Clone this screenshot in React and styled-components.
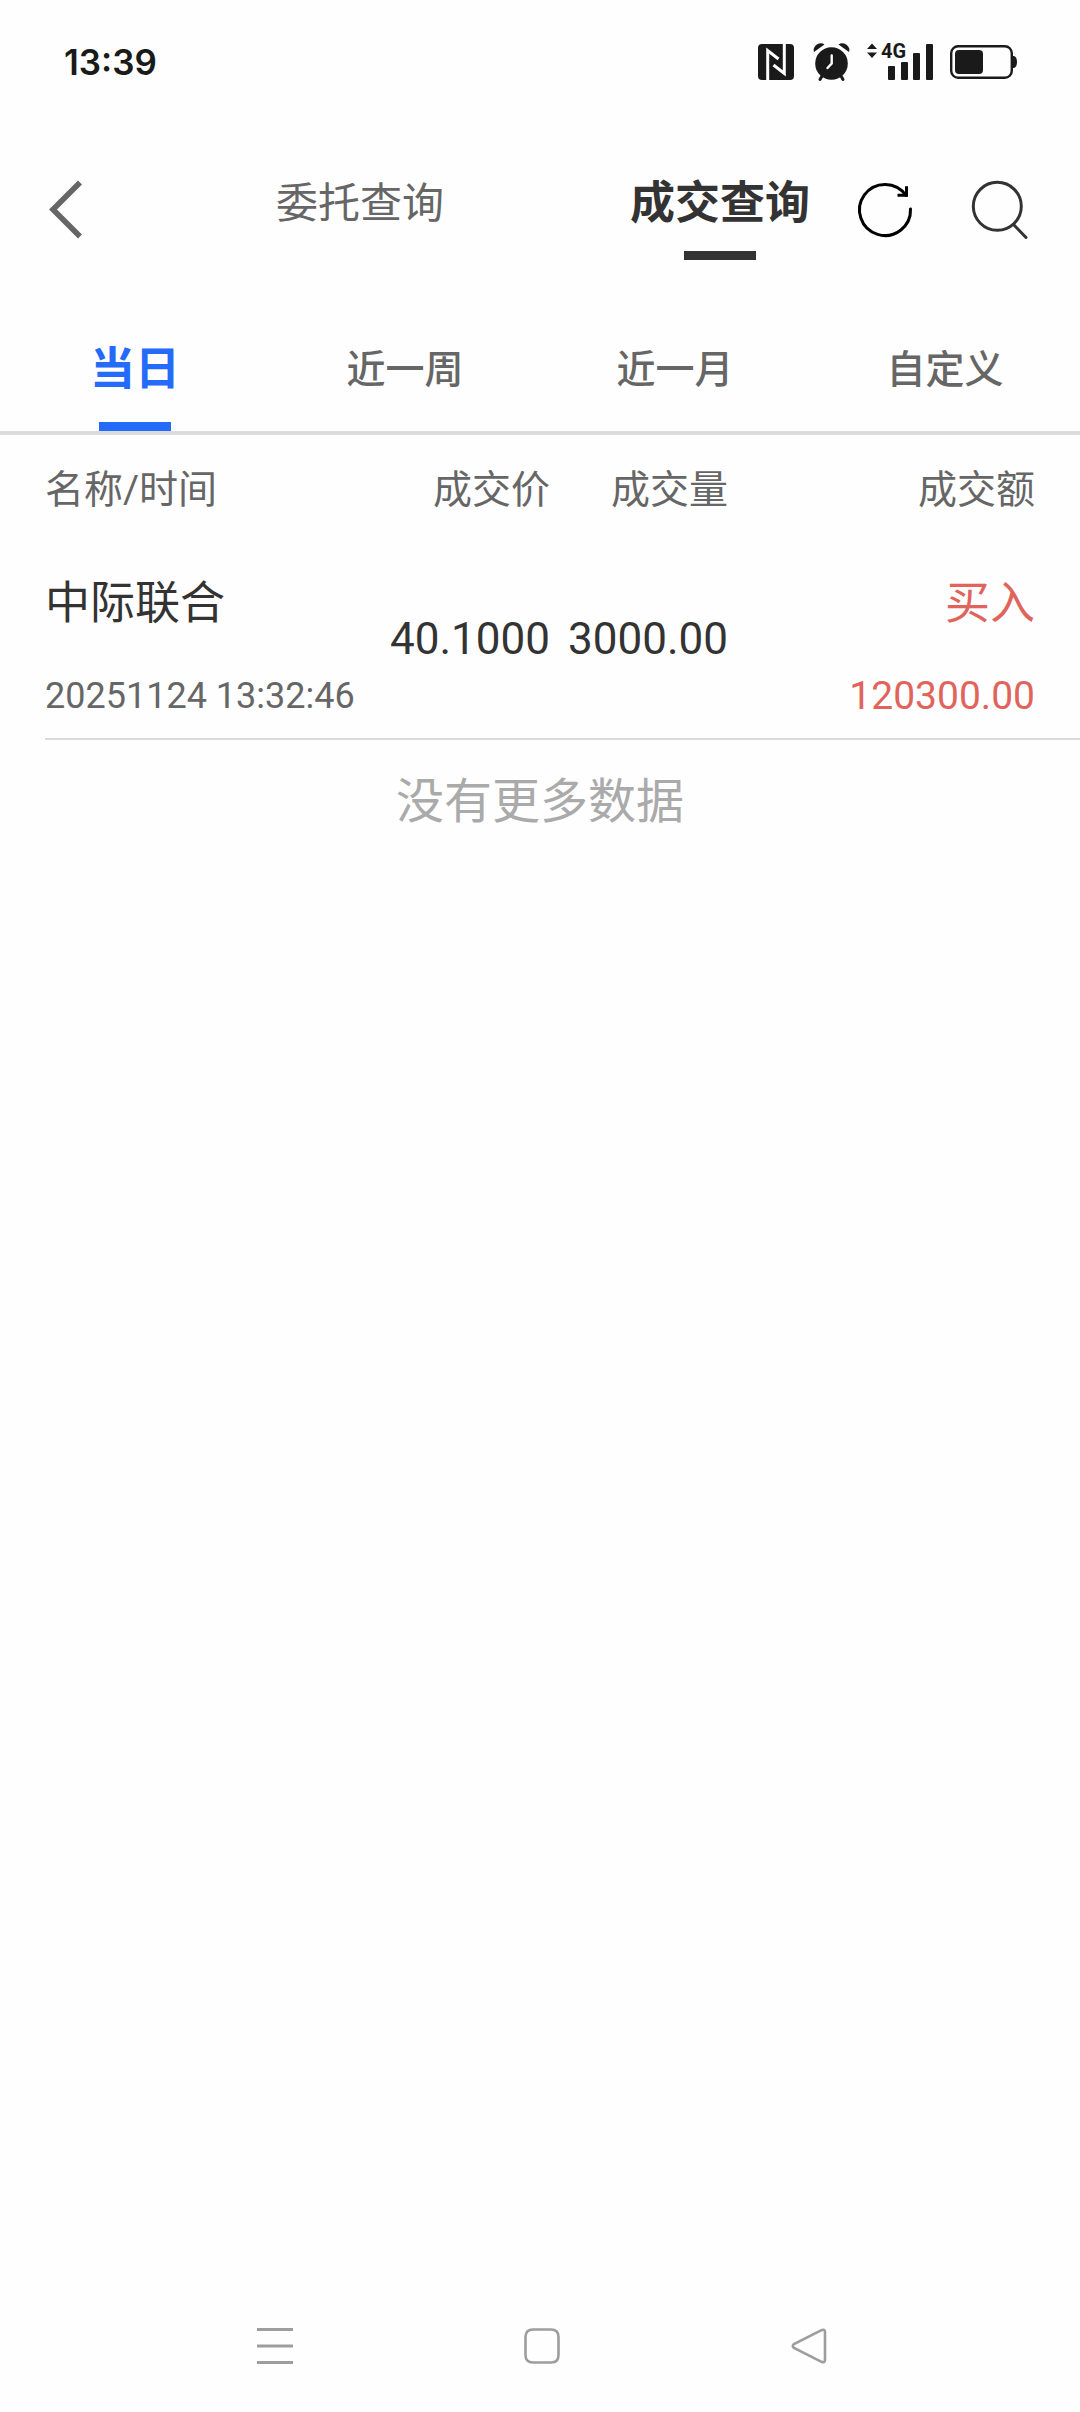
import React, { useState } from "react";
import styled, { createGlobalStyle } from "styled-components";

const periods = ["当日", "近一周", "近一月", "自定义"];

const deals = [
  {
    name: "中际联合",
    time: "20251124 13:32:46",
    price: "40.1000",
    volume: "3000.00",
    side: "买入",
    amount: "120300.00",
  },
];

const App = () => {
  const [page, setPage] = useState("成交查询");
  const [period, setPeriod] = useState("当日");

  return (
    <>
      <GlobalStyle />
      <Screen>
        <StatusBar>
          <Clock>13:39</Clock>
          <StatusIcons>
            <NfcIcon />
            <AlarmIcon />
            <SignalIcon />
            <BatteryIcon />
          </StatusIcons>
        </StatusBar>

        <Header>
          <IconButton aria-label="返回">
            <svg width="32" height="58" viewBox="0 0 32 58" fill="none" stroke="#666" strokeWidth="5.600">
              <path d="M30 1.500L3 28.500L30 55.500" />
            </svg>
          </IconButton>
          <PageTabs>
            {["委托查询", "成交查询"].map((item) => (
              <PageTab key={item} $active={item === page} onClick={() => setPage(item)}>
                {item}
              </PageTab>
            ))}
          </PageTabs>
          <Actions>
            <IconButton aria-label="刷新">
              <svg width="54" height="54" viewBox="0 0 54 54" fill="none" stroke="#000" strokeWidth="3">
                <path d="M52.500 26A25.500 25.500 0 1 1 48 12.500" strokeLinecap="round" />
                <path d="M39.500 12.300H48.500V3.200" />
              </svg>
            </IconButton>
            <IconButton aria-label="搜索">
              <svg width="56" height="58" viewBox="0 0 56 58" fill="none" stroke="#333" strokeWidth="3">
                <circle cx="25.300" cy="25.300" r="24" />
                <path d="M41.500 43.500L54 56.500" strokeLinecap="round" />
              </svg>
            </IconButton>
          </Actions>
        </Header>

        <Periods>
          {periods.map((item) => (
            <Period key={item} $active={item === period} onClick={() => setPeriod(item)}>
              {item}
            </Period>
          ))}
        </Periods>

        <Deals>
          <thead>
            <tr>
              <NameHead>名称/时间</NameHead>
              <NumberHead>成交价</NumberHead>
              <NumberHead>成交量</NumberHead>
              <AmountHead>成交额</AmountHead>
            </tr>
          </thead>
          <tbody>
            {deals.map((deal) => (
              <DealRow key={deal.time}>
                <NameCell>
                  <Name>{deal.name}</Name>
                  <Time>{deal.time}</Time>
                </NameCell>
                <NumberCell>{deal.price}</NumberCell>
                <NumberCell>{deal.volume}</NumberCell>
                <AmountCell>
                  <Side>{deal.side}</Side>
                  <Amount>{deal.amount}</Amount>
                </AmountCell>
              </DealRow>
            ))}
          </tbody>
        </Deals>
        <NoMore>没有更多数据</NoMore>

        <SystemNav>
          <IconButton aria-label="菜单">
            <svg width="36" height="36" viewBox="0 0 36 36" fill="none" stroke="#9d9d9d" strokeWidth="3">
              <path d="M0 1.500H36M0 18H36M0 34.500H36" />
            </svg>
          </IconButton>
          <IconButton aria-label="主屏幕">
            <svg width="36" height="36" viewBox="0 0 36 36" fill="none" stroke="#9d9d9d" strokeWidth="2.600">
              <path d="M9 1.500H27Q34.500 1.500 34.500 9V27Q34.500 34.500 27 34.500H9Q1.500 34.500 1.500 27V9Q1.500 1.500 9 1.500Z" />
            </svg>
          </IconButton>
          <IconButton aria-label="后退">
            <svg width="36" height="36" viewBox="0 0 36 36" fill="none" stroke="#9d9d9d" strokeWidth="2.600">
              <path d="M30.500 2.200L3 16Q0.500 18 3 20L30.500 33.800Q33.800 35.200 34 32V4Q33.800 0.800 30.500 2.200Z" />
            </svg>
          </IconButton>
        </SystemNav>
      </Screen>
    </>
  );
};

const NfcIcon = () => (
  <svg width="38" height="36" viewBox="0 0 38 36">
    <rect width="36" height="36" rx="4" fill="#1a1a1a" />
    <path
      d="M9.700 36V6.500L20.500 15M26.300 0V29.500L15.500 21"
      fill="none"
      stroke="#fefefe"
      strokeWidth="3"
    />
  </svg>
);

const AlarmIcon = () => (
  <svg width="37" height="38" viewBox="0 0 37 38" fill="none" strokeLinecap="round">
    <circle cx="18.500" cy="20.500" r="16.300" fill="#1a1a1a" />
    <path d="M1 9Q-0.500 5 3.500 1.800Q8 -1 11.500 1.500Z" fill="#1a1a1a" />
    <path d="M36 9Q37.500 5 33.500 1.800Q29 -1 25.500 1.500Z" fill="#1a1a1a" />
    <path d="M9 33L7 36.500M28 33L30 36.500" stroke="#1a1a1a" strokeWidth="3" />
    <path d="M18.700 12.500V20.500L14.500 25" stroke="#fefefe" strokeWidth="2.400" />
  </svg>
);

const SignalIcon = () => (
  <svg width="66" height="38" viewBox="0 0 66 38" fill="#1a1a1a">
    <path d="M5 0.500L10 6H0ZM5 15L0 9.500H10Z" />
    <text x="14" y="15" fontFamily="Roboto, sans-serif" fontWeight="700" fontSize="20">
      4G
    </text>
    <rect x="21" y="23" width="7" height="14" rx="1" />
    <rect x="34" y="19" width="7" height="18" rx="1" />
    <rect x="46" y="10" width="7" height="27" rx="1" />
    <rect x="59" y="1" width="7" height="36" rx="1" />
  </svg>
);

const BatteryIcon = () => (
  <svg width="67" height="34" viewBox="0 0 67 34">
    <rect x="1.200" y="1.200" width="60.600" height="31.600" rx="7" fill="none" stroke="#1a1a1a" strokeWidth="2.400" />
    <rect x="5" y="5" width="28" height="24" rx="4" fill="#1a1a1a" />
    <path d="M62 11H64Q67 12 67 17Q67 22 64 23H62Z" fill="#1a1a1a" />
  </svg>
);

const GlobalStyle = createGlobalStyle`
  * {
    box-sizing: border-box;
  }
  body {
    margin: 0;
    background-color: #fefefe;
    font-family: Roboto, "Noto Sans CJK SC", sans-serif;
    color: #333;
  }
  button {
    padding: 0;
    border: none;
    background: none;
    font-family: inherit;
    cursor: pointer;
  }
  svg {
    display: block;
    overflow: visible;
  }
`;

const Screen = styled.div`
  display: flex;
  flex-direction: column;
  min-height: 100vh;
`;

const StatusBar = styled.div`
  display: flex;
  align-items: center;
  justify-content: space-between;
  height: 124px;
  padding: 0 63px 0 64px;
`;

const Clock = styled.span`
  font-family: Inter, sans-serif;
  font-size: 35px;
  font-weight: 600;
  color: #1a1a1a;
`;

const StatusIcons = styled.div`
  display: flex;
  align-items: center;
  gap: 17px;
`;

const Header = styled.header`
  display: flex;
  align-items: center;
  height: 172px;
  padding: 0 52px 0 50px;
`;

const IconButton = styled.button`
  display: flex;
  align-items: center;
  justify-content: center;
`;

const PageTabs = styled.nav`
  display: flex;
  align-self: stretch;
  gap: 186px;
  margin: 0 48px 0 auto;
`;

const Tab = styled.button`
  display: flex;
  flex-direction: column;
  align-items: center;
  line-height: 60px;
  white-space: nowrap;

  &::after {
    content: "";
    width: 72px;
    height: 9px;
  }
`;

const PageTab = styled(Tab)`
  gap: 17px;
  padding-top: 50px;
  font-size: ${(props) => (props.$active ? "45px" : "42px")};
  font-weight: ${(props) => (props.$active ? 700 : 400)};
  color: ${(props) => (props.$active ? "#333" : "#666")};

  &::after {
    background-color: ${(props) => (props.$active ? "#333" : "transparent")};
  }
`;

const Actions = styled.div`
  display: flex;
  align-items: center;
  gap: 60px;
`;

const Periods = styled.nav`
  display: flex;
  border-bottom: 4px solid #dbdbdb;
`;

const Period = styled(Tab)`
  flex: 1;
  gap: 22px;
  padding-top: 44px;
  font-size: ${(props) => (props.$active ? "45px" : "39px")};
  font-weight: ${(props) => (props.$active ? 700 : 500)};
  color: ${(props) => (props.$active ? "#246bfa" : "#666")};

  &::after {
    background-color: ${(props) => (props.$active ? "#246bfa" : "transparent")};
  }
`;

const Deals = styled.table`
  table-layout: fixed;
  width: calc(100% - 45px);
  margin-left: 45px;
  border-collapse: collapse;
  line-height: 60px;
  white-space: nowrap;
`;

const HeadCell = styled.th`
  padding: 25px 0 20px;
  font-size: 39px;
  font-weight: 400;
  color: #666;
`;

const NameHead = styled(HeadCell)`
  width: 327px;
  text-align: left;
`;

const NumberHead = styled(HeadCell)`
  width: 178px;
  text-align: right;
`;

const AmountHead = styled(HeadCell)`
  padding-right: 45px;
  text-align: right;
`;

const DealRow = styled.tr`
  border-bottom: 2px solid #dadada;
`;

const NameCell = styled.td`
  padding: 34px 0 12px;
`;

const NumberCell = styled.td`
  padding: 0;
  font-size: 44px;
  text-align: right;
`;

const AmountCell = styled.td`
  padding: 34px 45px 12px 0;
  text-align: right;
  color: #e1645c;
`;

const Name = styled.div`
  font-size: 45px;
`;

const Time = styled.div`
  margin-top: 32px;
  font-size: 36px;
  color: #666;
`;

const Side = styled.div`
  font-size: 45px;
`;

const Amount = styled.div`
  margin-top: 32px;
  font-size: 39px;
`;

const NoMore = styled.p`
  margin: 0;
  padding: 32px 0;
  font-size: 48px;
  line-height: 60px;
  text-align: center;
  color: #aaa;
`;

const SystemNav = styled.nav`
  display: grid;
  grid-template-columns: repeat(3, 1fr);
  height: 132px;
  margin-top: auto;
  padding: 0 138px 0 141px;
`;

export default App;
